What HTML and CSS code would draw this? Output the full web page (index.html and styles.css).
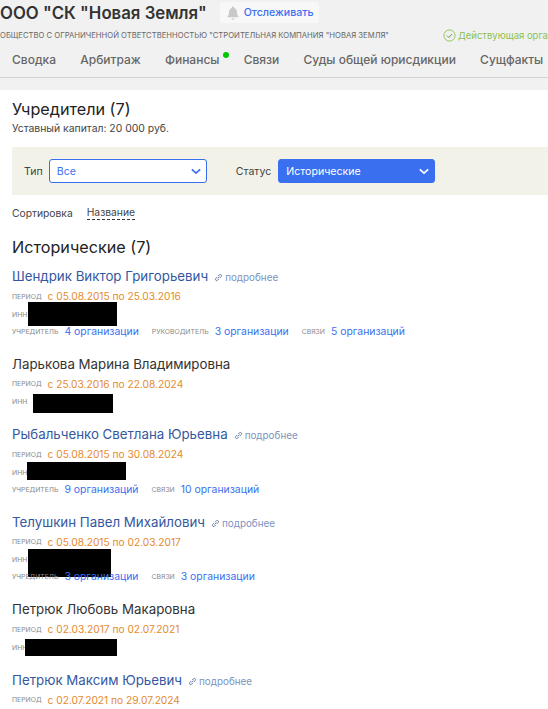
FILE: index.html
```html
<!DOCTYPE html>
<html lang="ru">
<head>
    <meta charset="UTF-8">
    <meta name="viewport" content="width=device-width, initial-scale=1.0">
    <title>ООО "СК "Новая Земля"</title>
    <link rel="stylesheet" href="styles.css">
</head>
<body>
    <header class="head">
        <div class="title-row">
            <h1>ООО "СК "Новая Земля"</h1>
            <button class="track">
                <svg class="bell" viewBox="0 0 12 14" width="12" height="14"><path d="M6 0.5c.6 0 1 .4 1 1v.4c2 .5 3 2.100 3 4.100 0 2.500.5 3.500 1.500 4.500v.8H.5v-.8C1.500 9.500 2 8.500 2 6c0-2 1-3.600 3-4.100v-.4c0-.6.4-1 1-1zM4.500 12.500h3c0 .8-.7 1.300-1.500 1.300s-1.500-.5-1.500-1.300z" fill="#c9c9c9"/></svg>
                Отслеживать
            </button>
        </div>
        <div class="sub-row">
            <span class="full-name">ОБЩЕСТВО С ОГРАНИЧЕННОЙ ОТВЕТСТВЕННОСТЬЮ "СТРОИТЕЛЬНАЯ КОМПАНИЯ "НОВАЯ ЗЕМЛЯ"</span>
            <span class="state">
                <svg viewBox="0 0 14 14" width="13" height="13"><circle cx="7" cy="7" r="6" fill="none" stroke="#8cc152" stroke-width="1"/><path d="M4.300 7.200l2 2 3.500-3.800" fill="none" stroke="#6b8f45" stroke-width="1"/></svg>
                Действующая организация
            </span>
        </div>
        <nav class="tabs">
            <a>Сводка</a>
            <a>Арбитраж</a>
            <a class="tab-dot">Финансы</a>
            <a>Связи</a>
            <a>Суды общей юрисдикции</a>
            <a>Сущфакты</a>
        </nav>
    </header>

    <main class="content">
        <h2>Учредители (7)</h2>
        <p class="capital">Уставный капитал: 20 000 руб.</p>

        <div class="filters">
            <label class="filter-label">Тип</label>
            <div class="select">
                Все
                <svg viewBox="0 0 12 8" width="10" height="7"><path d="M1 1.500l5 4.500 5-4.500" fill="none" stroke="#3a6ff0" stroke-width="2"/></svg>
            </div>
            <label class="filter-label status-label">Статус</label>
            <div class="select select-on">
                Исторические
                <svg viewBox="0 0 12 8" width="10" height="7"><path d="M1 1.500l5 4.500 5-4.500" fill="none" stroke="#fff" stroke-width="2"/></svg>
            </div>
        </div>

        <div class="sort">
            <span>Сортировка</span>
            <span class="sort-by">Название</span>
        </div>

        <h2 class="group">Исторические (7)</h2>

        <section class="person">
            <div class="name"><a>Шендрик Виктор Григорьевич</a><span class="more"><svg viewBox="0 0 10 10" width="9" height="9"><path d="M4 6l2-2M3.500 4.500L2 6a1.400 1.400 0 0 0 2 2l1.500-1.500M4.500 3.500L6 2a1.400 1.400 0 0 1 2 2L6.500 5.500" fill="none" stroke="#5a6f96" stroke-width="1"/></svg>подробнее</span></div>
            <div class="line"><span class="tag">ПЕРИОД</span><span class="period">с 05.08.2015 по 25.03.2016</span></div>
            <div class="line inn"><span class="tag">ИНН</span><i class="mask mask-1"></i></div>
            <div class="line links"><span class="tag">УЧРЕДИТЕЛЬ</span><a class="link">4 организации</a><span class="tag">РУКОВОДИТЕЛЬ</span><a class="link">3 организации</a><span class="tag">СВЯЗИ</span><a class="link">5 организаций</a></div>
        </section>

        <section class="person">
            <div class="name">Ларькова Марина Владимировна</div>
            <div class="line"><span class="tag">ПЕРИОД</span><span class="period">с 25.03.2016 по 22.08.2024</span></div>
            <div class="line inn"><span class="tag">ИНН</span><i class="mask mask-2"></i></div>
        </section>

        <section class="person">
            <div class="name"><a>Рыбальченко Светлана Юрьевна</a><span class="more"><svg viewBox="0 0 10 10" width="9" height="9"><path d="M4 6l2-2M3.500 4.500L2 6a1.400 1.400 0 0 0 2 2l1.500-1.500M4.500 3.500L6 2a1.400 1.400 0 0 1 2 2L6.500 5.500" fill="none" stroke="#5a6f96" stroke-width="1"/></svg>подробнее</span></div>
            <div class="line"><span class="tag">ПЕРИОД</span><span class="period">с 05.08.2015 по 30.08.2024</span></div>
            <div class="line inn"><span class="tag">ИНН</span><i class="mask mask-3"></i></div>
            <div class="line links"><span class="tag">УЧРЕДИТЕЛЬ</span><a class="link">9 организаций</a><span class="tag">СВЯЗИ</span><a class="link">10 организаций</a></div>
        </section>

        <section class="person">
            <div class="name"><a>Телушкин Павел Михайлович</a><span class="more"><svg viewBox="0 0 10 10" width="9" height="9"><path d="M4 6l2-2M3.500 4.500L2 6a1.400 1.400 0 0 0 2 2l1.500-1.500M4.500 3.500L6 2a1.400 1.400 0 0 1 2 2L6.500 5.500" fill="none" stroke="#5a6f96" stroke-width="1"/></svg>подробнее</span></div>
            <div class="line"><span class="tag">ПЕРИОД</span><span class="period">с 05.08.2015 по 02.03.2017</span></div>
            <div class="line inn"><span class="tag">ИНН</span><i class="mask mask-4"></i></div>
            <div class="line links"><span class="tag">УЧРЕДИТЕЛЬ</span><a class="link">3 организации</a><span class="tag">СВЯЗИ</span><a class="link">3 организации</a></div>
        </section>

        <section class="person">
            <div class="name">Петрюк Любовь Макаровна</div>
            <div class="line"><span class="tag">ПЕРИОД</span><span class="period">с 02.03.2017 по 02.07.2021</span></div>
            <div class="line inn"><span class="tag">ИНН</span><i class="mask mask-5"></i></div>
        </section>

        <section class="person">
            <div class="name"><a>Петрюк Максим Юрьевич</a><span class="more"><svg viewBox="0 0 10 10" width="9" height="9"><path d="M4 6l2-2M3.500 4.500L2 6a1.400 1.400 0 0 0 2 2l1.500-1.500M4.500 3.500L6 2a1.400 1.400 0 0 1 2 2L6.500 5.500" fill="none" stroke="#5a6f96" stroke-width="1"/></svg>подробнее</span></div>
            <div class="line"><span class="tag">ПЕРИОД</span><span class="period">с 02.07.2021 по 29.07.2024</span></div>
        </section>
    </main>
</body>
</html>
```

FILE: styles.css
```css
html, body {
    margin: 0;
    height: 709px;
    overflow: hidden;
}
body {
    font-family: Inter, "Noto Sans", sans-serif;
    color: #333;
    background-color: #fff;
}
.head {
    height: 90px;
    background-color: #f1f1f1;
    overflow: hidden;
    white-space: nowrap;
}
.title-row {
    display: flex;
    align-items: center;
    height: 25px;
}
h1 {
    margin: 0 13px 0 0;
    font-size: 16.800px;
    font-weight: 600;
    color: #333;
}
.track {
    display: flex;
    align-items: center;
    gap: 5px;
    height: 21px;
    padding: 0 6px 0 7px;
    border: none;
    border-radius: 3px;
    background-color: #f8f8f8;
    color: #3a6ff0;
    font-family: inherit;
    font-size: 10.600px;
    font-weight: 500;
}
.sub-row {
    display: flex;
    align-items: center;
    height: 20px;
}
.full-name {
    font-size: 7.700px;
    color: #666;
    width: 443px;
    flex: none;
}
.state {
    display: flex;
    align-items: center;
    gap: 2px;
    font-size: 9.500px;
    color: #8cc152;
}
.tabs {
    display: flex;
    gap: 24.200px;
    box-sizing: border-box;
    height: 33px;
    padding: 6px 0 0 12px;
    border-bottom: 1px solid #d4d4d4;
}
.tabs a {
    font-size: 12px;
    font-weight: 500;
    color: #666;
    line-height: 18px;
}
.tab-dot {
    position: relative;
}
.tab-dot::after {
    content: "";
    position: absolute;
    top: 1px;
    right: -10px;
    width: 6px;
    height: 6px;
    border-radius: 50%;
    background-color: #00c800;
}
.content {
    padding: 9px 0 0 12px;
}
h2 {
    margin: 0;
    font-size: 16.200px;
    font-weight: 400;
    color: #222;
    line-height: 20px;
}
.capital {
    margin: 3px 0 0;
    font-size: 10.400px;
    line-height: 14px;
    color: #444;
}
.filters {
    display: flex;
    align-items: center;
    height: 48px;
    margin-top: 11px;
    padding-left: 12px;
    background-color: #f2f2e8;
}
.filter-label {
    font-size: 10.600px;
    color: #444;
    margin-right: 6px;
}
.status-label {
    margin-left: 29px;
    margin-right: 7px;
}
.select {
    display: flex;
    align-items: center;
    justify-content: space-between;
    box-sizing: border-box;
    width: 158px;
    height: 24px;
    padding: 0 5px 0 7px;
    background-color: #fff;
    border: 1px solid #3a6ff0;
    border-radius: 3px;
    font-size: 10.600px;
    color: #3a6ff0;
}
.select-on {
    width: 157px;
    background-color: #3a6ff0;
    color: #fff;
}
.sort {
    display: flex;
    gap: 14px;
    margin-top: 11px;
    font-size: 10.300px;
    line-height: 14px;
    color: #444;
}
.sort-by {
    border-bottom: 1px dashed #333;
    line-height: 13px;
}
.group {
    margin-top: 17px;
}
.person {
    margin-top: 15.500px;
}
.group + .person {
    margin-top: 10px;
}
.name {
    font-size: 13.300px;
    line-height: 18px;
    color: #333;
    white-space: nowrap;
}
.name a {
    color: #34589f;
}
.more {
    margin-left: 6px;
    font-size: 9.900px;
    line-height: 1;
    color: #7d94c0;
}
.more svg {
    margin-right: 2px;
    vertical-align: -1px;
}
.line {
    position: relative;
    display: flex;
    align-items: center;
    margin-top: 2px;
    height: 16px;
    white-space: nowrap;
}
.name + .line {
    margin-top: 3px;
}
.links {
    margin-top: 1px;
}
.tag {
    font-size: 6.850px;
    color: #888;
    margin-right: 6px;
}
.link + .tag {
    margin-left: 13px;
}
.period {
    font-size: 10.200px;
    color: #e58a2c;
}
.link {
    font-size: 10.400px;
    color: #3a6ff0;
}
.mask {
    position: absolute;
    background-color: #000;
}
.mask-1 { left: 16px; top: -4px; width: 89px; height: 24px; }
.mask-2 { left: 21px; top: 0.500px; width: 80px; height: 19px; }
.mask-3 { left: 15px; top: -2px; width: 99px; height: 18px; }
.mask-4 { left: 16px; top: -2.500px; width: 83px; height: 28px; }
.mask-5 { left: 13px; top: 0; width: 92px; height: 17px; }
```
